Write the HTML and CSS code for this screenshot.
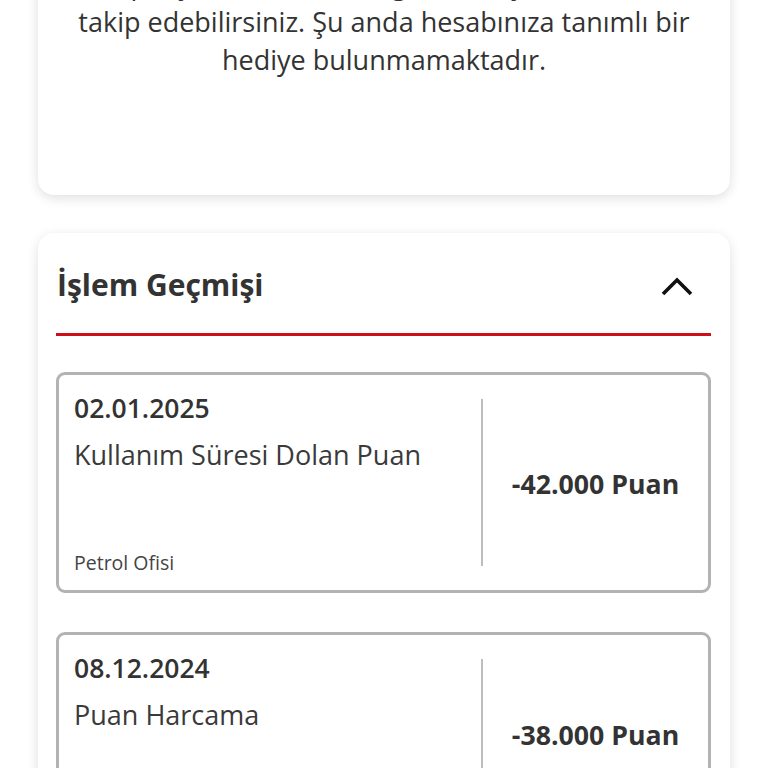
FILE: index.html
```
<!DOCTYPE html>
<html lang="tr">
<head>
<meta charset="utf-8">
<title>İşlem Geçmişi</title>
<link rel="stylesheet" href="styles.css">
</head>
<body>
<main class="page">
  <section class="card gift-card">
    <p class="gift-text">Kampanyalardan kazandığınız hediyeleri buradan<br>takip edebilirsiniz. Şu anda hesabınıza tanımlı bir<br>hediye bulunmamaktadır.</p>
  </section>

  <section class="card history">
    <header class="history-head">
      <h2 class="history-title">İşlem Geçmişi</h2>
      <svg class="chevron" width="34" height="20" viewBox="0 0 34 20" aria-hidden="true">
        <polyline points="3,17 17,3 31,17" fill="none" stroke="#111" stroke-width="3.6"/>
      </svg>
    </header>

    <ul class="txn-list">
      <li class="txn txn--tall">
        <div class="txn-info">
          <div class="txn-date">02.01.2025</div>
          <div class="txn-desc">Kullanım Süresi Dolan Puan</div>
          <div class="txn-brand">Petrol Ofisi</div>
        </div>
        <div class="txn-divider"></div>
        <div class="txn-amount">-42.000 Puan</div>
      </li>
      <li class="txn">
        <div class="txn-info">
          <div class="txn-date">08.12.2024</div>
          <div class="txn-desc">Puan Harcama</div>
          <div class="txn-brand">Petrol Ofisi</div>
        </div>
        <div class="txn-divider"></div>
        <div class="txn-amount">-38.000 Puan</div>
      </li>
    </ul>
  </section>
</main>
</body>
</html>
```
FILE: styles.css
```
* { box-sizing: border-box; }

html, body {
  margin: 0;
  padding: 0;
  background: #ffffff;
}

body {
  font-family: "Open Sans", "Noto Sans", "DejaVu Sans", sans-serif;
  color: #333333;
  overflow: hidden;
}

.page {
  display: flex;
  flex-direction: column;
  gap: 38px;
  padding: 0 38px;
}

.card {
  background: #ffffff;
  border-radius: 16px;
  box-shadow: 0 3px 12px rgba(0, 0, 0, 0.13);
}

.gift-card {
  margin-top: -60px;
  padding: 25px 20px 116px;
}

.gift-text {
  margin: 0;
  font-size: 27px;
  line-height: 38px;
  text-align: center;
  white-space: nowrap;
  color: #333333;
}

.history {
  padding: 30px 19px 40px 18px;
}

.history-head {
  display: flex;
  align-items: center;
  justify-content: space-between;
  padding-bottom: 26px;
  border-bottom: 3px solid #cc0f1a;
}

.history-title {
  margin: 0 0 0 1px;
  font-size: 30px;
  line-height: 44px;
  font-weight: 700;
  color: #333333;
}

.chevron {
  margin-right: 17px;
  margin-top: 4px;
}

.txn-list {
  list-style: none;
  margin: 36px 0 0;
  padding: 0;
  display: flex;
  flex-direction: column;
  gap: 39px;
}

.txn {
  display: flex;
  min-height: 203px;
  border: 3px solid #b3b3b3;
  border-radius: 9px;
  background: #ffffff;
}

.txn--tall {
  min-height: 221px;
}

.txn-info {
  flex: 0 0 422px;
  display: flex;
  flex-direction: column;
  padding: 17px 15px 15px;
}

.txn-date {
  font-size: 26.5px;
  line-height: 32px;
  font-weight: 600;
  color: #333333;
}

.txn-desc {
  margin-top: 15px;
  font-size: 27px;
  line-height: 32px;
  color: #3a3a3a;
}

.txn-brand {
  margin-top: auto;
  font-size: 19.5px;
  line-height: 24px;
  color: #444444;
}

.txn-divider {
  width: 2px;
  margin: 24px 0;
  background: #bdbdbd;
}

.txn-amount {
  flex: 1;
  display: flex;
  align-items: center;
  justify-content: center;
  font-size: 26.7px;
  font-weight: 700;
  color: #333333;
  padding-top: 2px;
}
```
